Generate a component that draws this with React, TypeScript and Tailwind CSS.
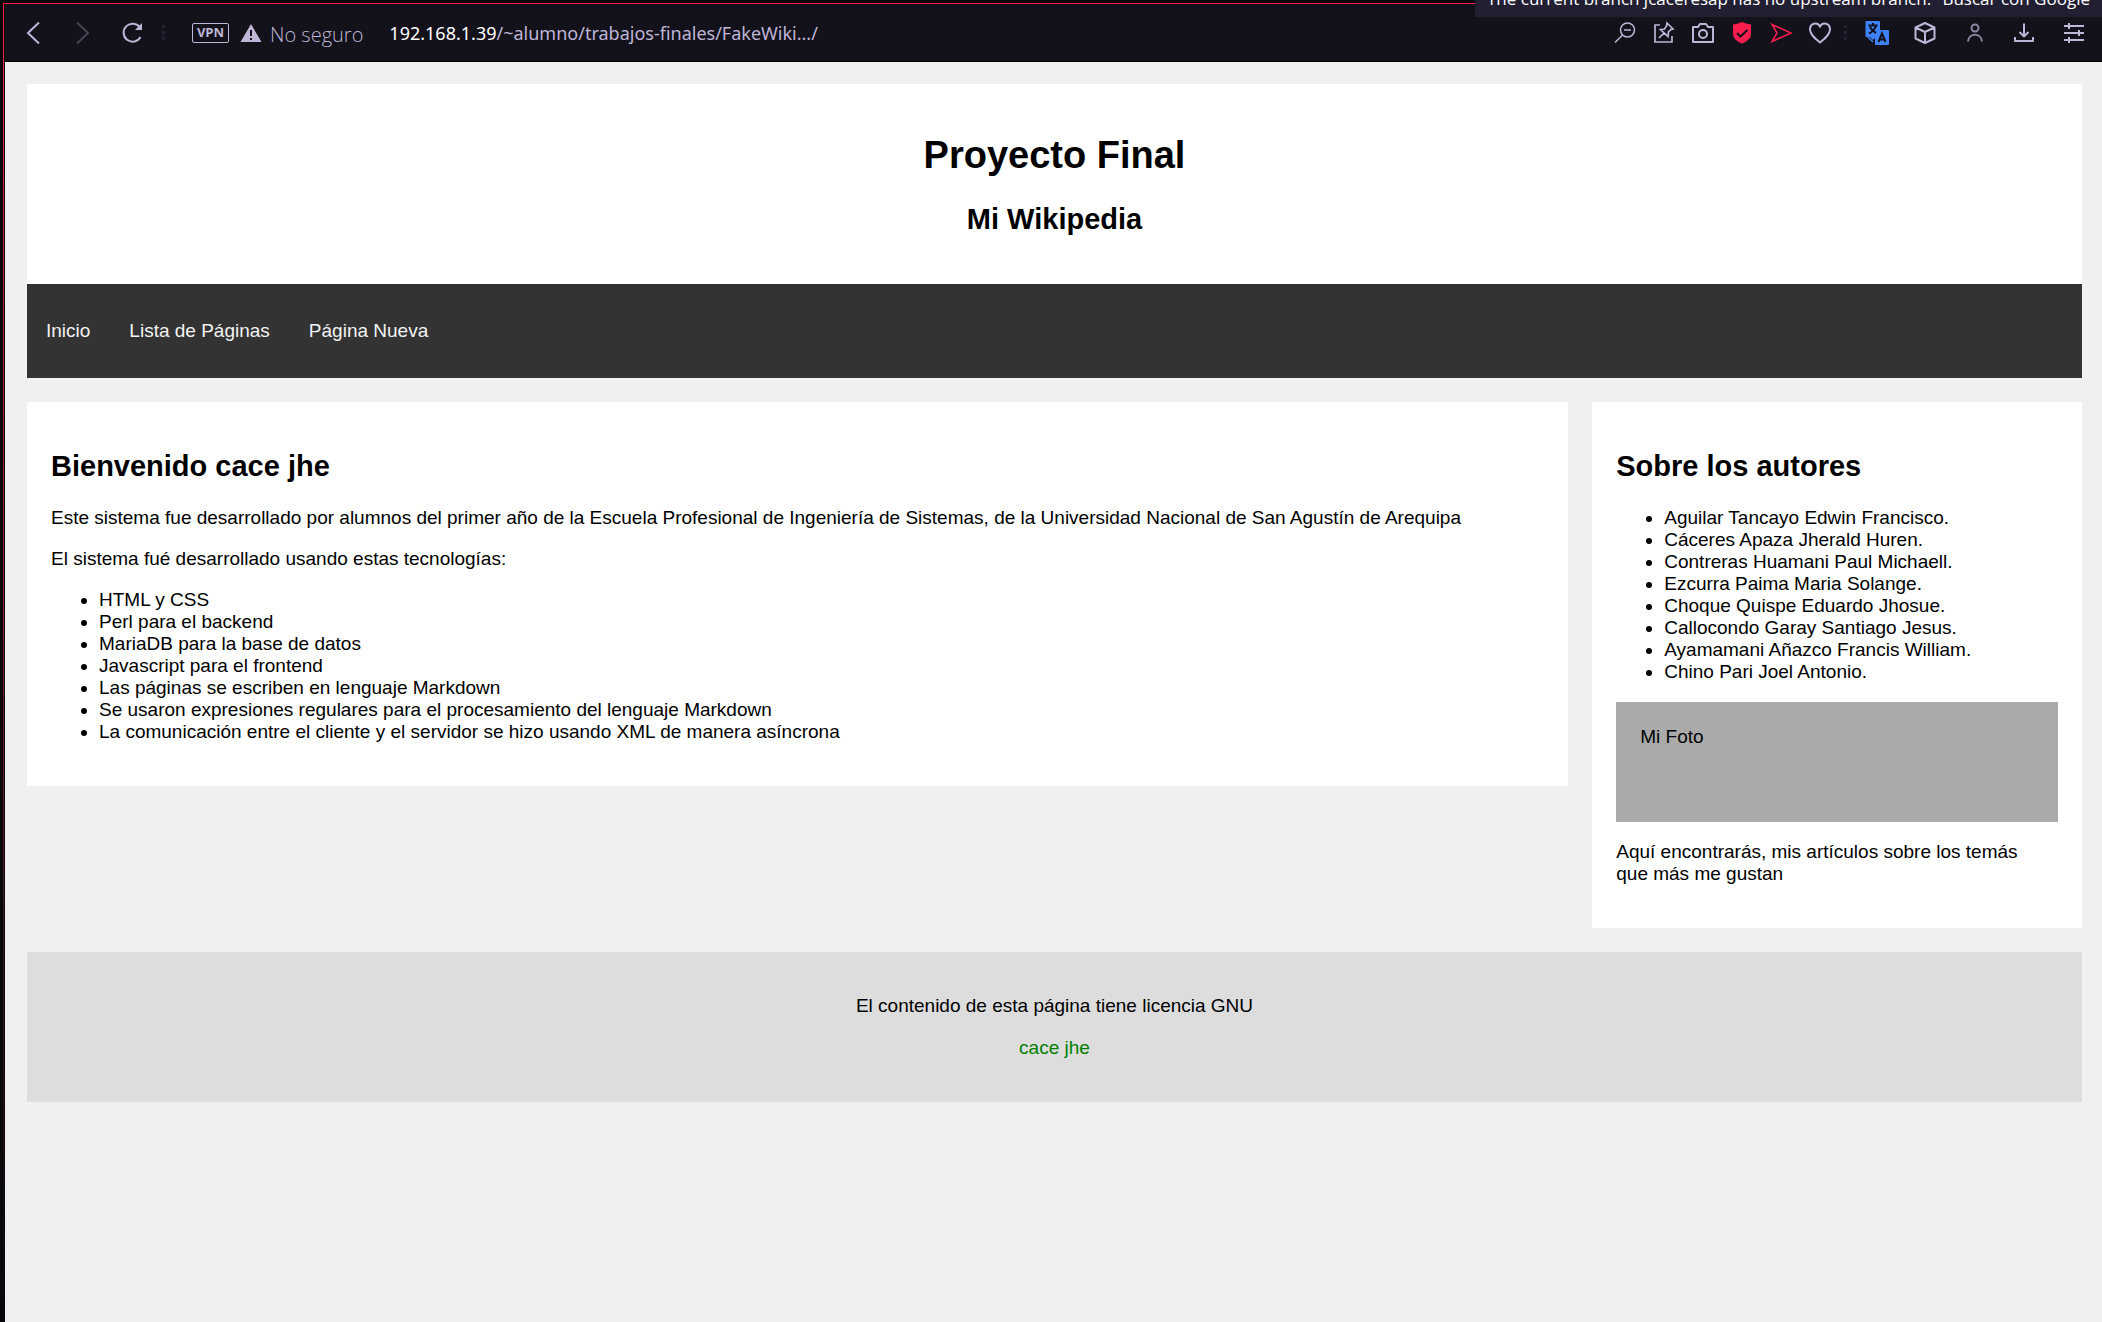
import React from 'react';

const technologies = [
  'HTML y CSS',
  'Perl para el backend',
  'MariaDB para la base de datos',
  'Javascript para el frontend',
  'Las páginas se escriben en lenguaje Markdown',
  'Se usaron expresiones regulares para el procesamiento del lenguaje Markdown',
  'La comunicación entre el cliente y el servidor se hizo usando XML de manera asíncrona',
];

const authors = [
  'Aguilar Tancayo Edwin Francisco.',
  'Cáceres Apaza Jherald Huren.',
  'Contreras Huamani Paul Michaell.',
  'Ezcurra Paima Maria Solange.',
  'Choque Quispe Eduardo Jhosue.',
  'Callocondo Garay Santiago Jesus.',
  'Ayamamani Añazco Francis William.',
  'Chino Pari Joel Antonio.',
];

type ButtonProps = { label: string; className?: string; children: React.ReactNode };

function IconButton({ label, className = '', children }: ButtonProps) {
  return (
    <button type="button" aria-label={label} className={`flex shrink-0 items-center justify-center ${className}`}>
      <svg width="24" height="24" viewBox="0 0 24 24" fill="none" stroke="currentColor" strokeWidth="2">
        {children}
      </svg>
    </button>
  );
}

function Dots() {
  return (
    <span className="flex shrink-0 flex-col gap-[3px]">
      <i className="size-[3px] bg-[#252136]" />
      <i className="size-[3px] bg-[#252136]" />
      <i className="size-[3px] bg-[#252136]" />
    </span>
  );
}

function Toolbar() {
  return (
    <div className="flex h-[58px] items-center justify-between border-b border-black bg-[#13111a] pr-4 pl-4 font-['Open_Sans','Noto_Sans',sans-serif] text-[#bfb5d7]">
      <div className="flex items-center">
        <IconButton label="Atrás">
          <path d="M18 1.500 7 12l11 10.500" />
        </IconButton>
        <IconButton label="Adelante" className="ml-[25px] text-[#474254]">
          <path d="m7 1.500 11 10.500-11 10.500" />
        </IconButton>
        <IconButton label="Recargar" className="ml-[26px]">
          <path d="M20 6.500A9 9 0 1 0 20.500 16" />
          <path d="M22 2v7h-7z" fill="currentColor" stroke="none" />
        </IconButton>
        <span className="ml-[18px] flex">
          <Dots />
        </span>
        <span className="ml-[27px] flex h-5 w-[37px] items-center justify-center rounded-[2px] border border-[#bfb5d7] text-[13px] font-bold">
          VPN
        </span>
        <svg className="ml-[11px]" width="22" height="20" viewBox="0 0 22 20">
          <path d="M11 1 21.500 19H.5z" fill="#bfb5d7" />
          <path d="M11 7v6M11 15v2" stroke="#13111a" strokeWidth="2" />
        </svg>
        <span className="ml-2 pt-1 text-[20px] leading-6 font-light">No seguro</span>
        <span className="ml-[26px] font-['Noto_Sans',sans-serif] text-[18px] leading-6">
          <span className="text-white">192.168.1.39</span>/~alumno/trabajos-finales/FakeWiki.../
        </span>
      </div>
      <div className="flex items-center">
        <IconButton label="Reducir zoom">
          <g strokeWidth="1.500">
            <circle cx="14.500" cy="9" r="7" />
            <path d="M11 9h7M9.500 14 2 21.500" />
          </g>
        </IconButton>
        <IconButton label="Fijar" className="ml-[15px]">
          <path
            d="M8 4H3v17h17v-6M15 2l6 6-2 .500-2.500 2.500-.500 4.500L8.500 8.500l4-.500 2-3zM12 12l-5 5"
            strokeWidth="1.700"
          />
        </IconButton>
        <IconButton label="Captura" className="ml-[15px]">
          <path d="M2 6h5l2-3h6l2 3h5v15H2z" strokeLinejoin="round" />
          <circle cx="12" cy="13" r="4" />
        </IconButton>
        <IconButton label="Bloqueador" className="ml-[15px] text-[#fa1e4e]">
          <path d="M12 1q5 2 9 2.500V13q0 6-9 9.500Q3 19 3 13V3.500Q7 3 12 1z" fill="currentColor" stroke="none" />
          <path d="m7 12 3.500 3.500L17.500 9" stroke="#13111a" />
        </IconButton>
        <IconButton label="Enviar" className="ml-[15px] text-[#fa1e4e]">
          <path d="m3 3.500 19 8.500-19 8.500L8 12z" strokeWidth="1.500" />
        </IconButton>
        <IconButton label="Favoritos" className="ml-[15px]">
          <path d="M12 21.500C7 17.500 2 13.500 2 8.500 2 1.500 9.500 1 12 5.500c2.500-4.500 10-4 10 3 0 5-5 9-10 13z" />
        </IconButton>
        <span className="ml-3 flex">
          <Dots />
        </span>
        <button type="button" aria-label="Traducir" className="ml-[18px] shrink-0">
          <svg width="24" height="24" viewBox="0 0 24 24">
            <path d="M1.500 0H14q1 0 1 1v8h8q1 0 1 1v13q0 1-1 1H10v-7l-2 2-3-3H1.500q-1 0-1-1V1q0-1 1-1z" fill="#3d82f7" />
            <path
              d="M3.500 4.500h9M8 2v2.500M11 5q-2 5-7 7.500M5 6q2 4 6 6M13.500 21 17 12.500l3.500 8.500M15 18.500h4.500"
              fill="none"
              stroke="#13111a"
              strokeWidth="2"
            />
            <path d="m3 16 5 5" fill="none" stroke="#3d82f7" strokeWidth="1.500" />
          </svg>
        </button>
        <IconButton label="Extensiones" className="ml-6">
          <path d="m12 2 9.500 4.500v11L12 22l-9.500-4.500v-11zM2.500 6.500 12 11l9.500-4.500M12 11v11" strokeLinejoin="round" />
        </IconButton>
        <IconButton label="Perfil" className="ml-[26px] text-[#8d86a0]">
          <circle cx="12" cy="7" r="3.500" />
          <path d="M5 20.500c.500-9 13.500-9 14 0" />
        </IconButton>
        <IconButton label="Descargas" className="ml-[25px]">
          <path d="M12 2.500V15M7.500 11l4.500 4.500 4.500-4.500M3 16v4h18v-4" strokeLinejoin="round" />
        </IconButton>
        <IconButton label="Configuración" className="ml-[26px]">
          <path d="M2 5h20M2 12h20M2 19h20M7 2v6M17 9v6M7 16v6" />
        </IconButton>
      </div>
    </div>
  );
}

function TabTooltip() {
  return (
    <div className="absolute top-0 right-0 flex h-[17px] w-[627px] items-end justify-between overflow-hidden bg-[#231f33] px-3 pb-[6px] font-['Open_Sans','Noto_Sans',sans-serif] text-[17px] leading-6 whitespace-nowrap text-white">
      <span>The current branch jcaceresap has no upstream branch.</span>
      <span>Buscar con Google</span>
    </div>
  );
}

export default function App() {
  return (
    <div className="relative flex min-h-screen bg-[#08070b] pt-[3px] pl-[3px]">
      <div className="w-px shrink-0 bg-gradient-to-b from-[#fa1e4e] to-[#08070b]" />
      <div className="flex grow flex-col">
        <div className="h-px bg-[#fa1e4e]" />
        <div className="flex grow flex-col pl-px">
          <Toolbar />
          <div className="grow bg-[#f0f0f0] pt-[22px] pr-5 pl-[22px] font-['Liberation_Sans',Arial,sans-serif] text-[19px] leading-[22px] text-black">
            <header className="bg-white px-6 pt-[50px] pb-12 text-center font-bold">
              <h1 className="text-[38px] leading-[43px]">Proyecto Final</h1>
              <h2 className="mt-[26px] text-[29px] leading-[33px]">Mi Wikipedia</h2>
            </header>
            <nav className="flex gap-px bg-[#333333] py-[19px] text-[#f2f2f2]">
              <a href="#inicio" className="px-[19px] py-[17px]">Inicio</a>
              <a href="#lista" className="px-[19px] py-[17px]">Lista de Páginas</a>
              <a href="#nueva" className="px-[19px] py-[17px]">Página Nueva</a>
            </nav>
            <div className="mt-6 flex items-start gap-6">
              <main className="w-3/4 shrink-0 bg-white px-6 pt-12 pb-[43px]">
                <h2 className="mb-6 text-[29px] leading-[33px] font-bold">Bienvenido cace jhe</h2>
                <p>
                  Este sistema fue desarrollado por alumnos del primer año de la Escuela Profesional de Ingeniería de
                  Sistemas, de la Universidad Nacional de San Agustín de Arequipa
                </p>
                <p className="my-[19px]">El sistema fué desarrollado usando estas tecnologías:</p>
                <ul className="list-disc pl-12">
                  {technologies.map((item) => (
                    <li key={item}>{item}</li>
                  ))}
                </ul>
              </main>
              <aside className="min-w-0 grow bg-white px-6 pt-12 pb-[43px]">
                <h2 className="mb-6 text-[29px] leading-[33px] font-bold">Sobre los autores</h2>
                <ul className="list-disc pl-12">
                  {authors.map((name) => (
                    <li key={name}>{name}</li>
                  ))}
                </ul>
                <div className="my-[19px] h-[120px] bg-[#aaaaaa] p-6">Mi Foto</div>
                <p className="pr-6">Aquí encontrarás, mis artículos sobre los temás que más me gustan</p>
              </aside>
            </div>
            <footer className="mt-6 bg-[#dddddd] px-6 py-[43px] text-center">
              <p>El contenido de esta página tiene licencia GNU</p>
              <p className="mt-5 text-[#008000]">cace jhe</p>
            </footer>
          </div>
        </div>
      </div>
      <TabTooltip />
    </div>
  );
}
